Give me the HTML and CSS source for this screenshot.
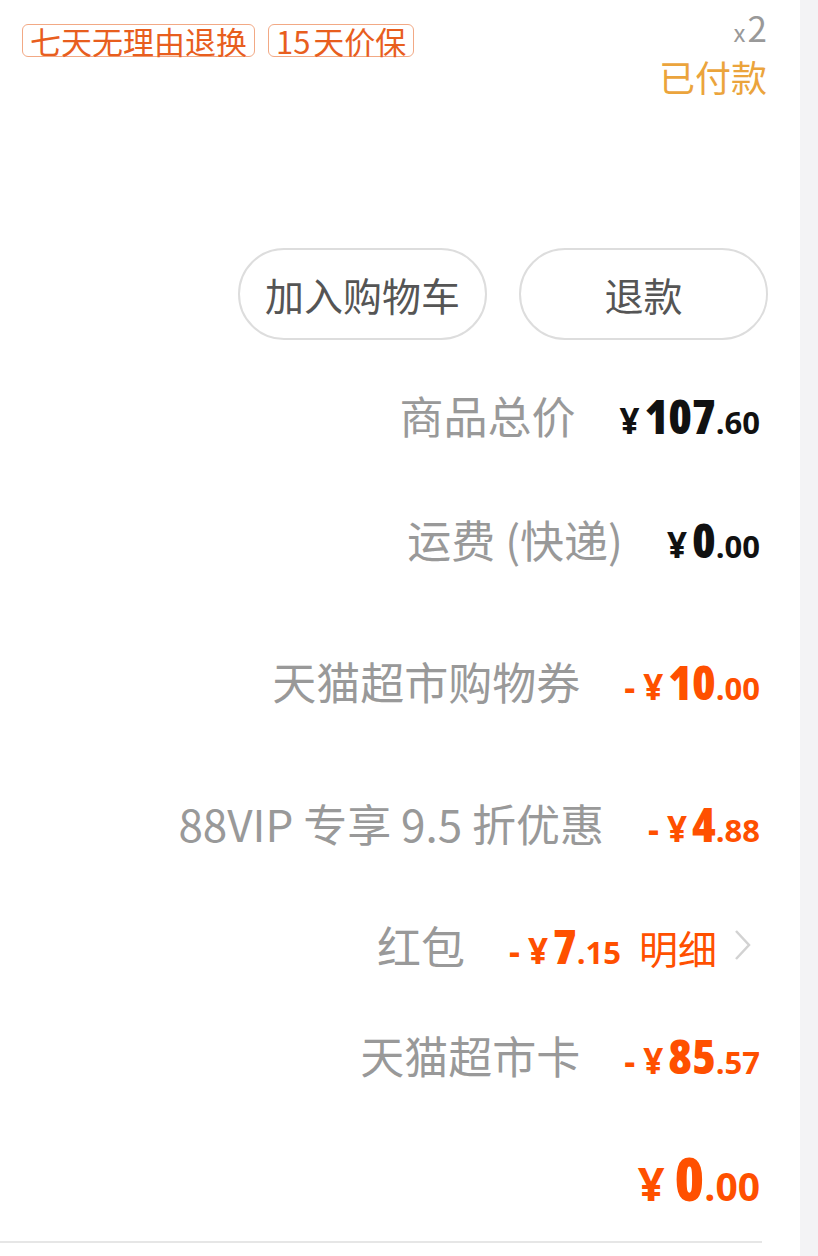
FILE: index.html
```html
<!DOCTYPE html>
<html lang="zh-CN">
<head>
  <meta charset="UTF-8" />
  <title>订单详情</title>
  <link rel="stylesheet" href="styles.css">
</head>
<body>
<div class="page">
  <div class="main">

    <!-- tags + status -->
    <div class="head">
      <div class="tags">
        <span class="tag">七天无理由退换</span>
        <span class="tag tag-short">15 天价保</span>
      </div>
      <div class="status">
        <div class="qty"><span class="qty-x">x</span>2</div>
        <div class="paid">已付款</div>
      </div>
    </div>

    <div class="actions">
      <button class="btn">加入购物车</button>
      <button class="btn">退款</button>
    </div>

    <!-- price rows -->
    <div class="row row-1">
      <span class="label">商品总价</span>
      <span class="price"><i class="yen">¥</i><b>107</b><small>.60</small></span>
    </div>
    <div class="row row-2">
      <span class="label">运费 (快递)</span>
      <span class="price"><i class="yen">¥</i><b>0</b><small>.00</small></span>
    </div>
    <div class="row row-3">
      <span class="label">天猫超市购物券</span>
      <span class="price off"><i class="minus">-</i><i class="yen">¥</i><b>10</b><small>.00</small></span>
    </div>
    <div class="row row-4">
      <span class="label">88VIP 专享 9.5 折优惠</span>
      <span class="price off"><i class="minus">-</i><i class="yen">¥</i><b>4</b><small>.88</small></span>
    </div>
    <div class="row row-5">
      <span class="label">红包</span>
      <span class="price off"><i class="minus">-</i><i class="yen">¥</i><b>7</b><small>.15</small></span>
      <span class="detail">明细</span>
      <svg class="chevron" width="20" height="34" viewBox="0 0 20 34">
        <polyline points="4,3 17,17 4,31" fill="none" stroke="#d2d2d2" stroke-width="2.5"/>
      </svg>
    </div>
    <div class="row row-6">
      <span class="label">天猫超市卡</span>
      <span class="price off"><i class="minus">-</i><i class="yen">¥</i><b>85</b><small>.57</small></span>
    </div>
    <div class="row row-7">
      <span class="price total"><i class="yen">¥</i><b>0</b><small>.00</small></span>
    </div>

    <div class="divider"></div>
  </div>
  <div class="strip"></div>
</div>
</body>
</html>
```

FILE: styles.css
```css
body {
  margin: 0;
  background: #fff;
  font-family: "Noto Sans CJK SC", "Noto Sans", sans-serif;
}

.page {
  display: flex;
  width: 818px;
  height: 1256px;
  overflow: hidden;
}

.main {
  width: 800px;
  background: #fff;
}

.strip {
  flex: 1;
  background: #f3f3f5;
}

/* header */
.head {
  display: flex;
  justify-content: space-between;
  align-items: flex-start;
  padding: 0 33px 0 22px;
}

.tags {
  display: flex;
  gap: 13px;
  margin-top: 24px;
}

.tag {
  border: 1.5px solid #f2a985;
  border-radius: 6px;
  color: #e85e1e;
  font-size: 31px;
  line-height: 31px;
  padding: 0 7px;
}

.tag-short {
  word-spacing: -4px;
}

.status {
  display: flex;
  flex-direction: column;
  align-items: flex-end;
  padding-top: 2px;
}

.qty {
  color: #999;
  font-size: 35px;
  line-height: 50px;
}

.qty-x {
  font-size: 24px;
  line-height: 24px;
  margin-right: 2px;
}

.paid {
  color: #eba43c;
  font-size: 36px;
  line-height: 48px;
}

/* buttons */
.actions {
  display: flex;
  justify-content: flex-end;
  gap: 32px;
  padding-right: 32px;
  margin-top: 148px;
}

.btn {
  width: 249px;
  height: 92px;
  border: 2px solid #ddd;
  border-radius: 46px;
  background: #fff;
  color: #555;
  font-family: "Noto Sans CJK SC", sans-serif;
  font-size: 39px;
  padding: 0;
}

/* price rows */
.row {
  display: flex;
  justify-content: flex-end;
  align-items: baseline;
  gap: 44px;
  padding-right: 40px;
  height: 60px;
  line-height: 60px;
}

.row-1 { margin-top: 45px; }
.row-2 { margin-top: 64px; }
.row-3 { margin-top: 82px; }
.row-4 { margin-top: 82px; }
.row-5 { margin-top: 62px; }
.row-6 { margin-top: 50px; }
.row-7 { margin-top: 63px; }

.label {
  color: #999;
  font-size: 44px;
}

.price {
  font-family: "Open Sans", "DejaVu Sans Condensed", sans-serif;
  font-stretch: 75%;
  font-weight: bold;
  color: #111;
  white-space: nowrap;
}

.price i {
  font-style: normal;
}

.price .minus {
  font-size: 36px;
  margin-right: 8px;
}

.price .yen {
  font-size: 35px;
  font-stretch: 100%;
  margin-right: 5px;
}

.price b {
  font-size: 48px;
}

.price small {
  font-size: 31px;
  font-stretch: 100%;
}

.price.off {
  color: #ff5000;
}

.price.total {
  color: #ff5000;
}

.price.total .yen {
  font-size: 47px;
  margin-right: 10px;
}

.price.total b {
  font-size: 60px;
}

.price.total small {
  font-size: 39px;
}

.row-5 {
  padding-right: 48px;
}

.row-5 .detail {
  color: #ff5000;
  font-size: 39px;
  margin-left: -26px;
}

.row-5 .chevron {
  margin-left: -29px;
  align-self: center;
}

.divider {
  width: 762px;
  height: 2px;
  background: #e6e6e6;
  margin-top: 33px;
}
```
